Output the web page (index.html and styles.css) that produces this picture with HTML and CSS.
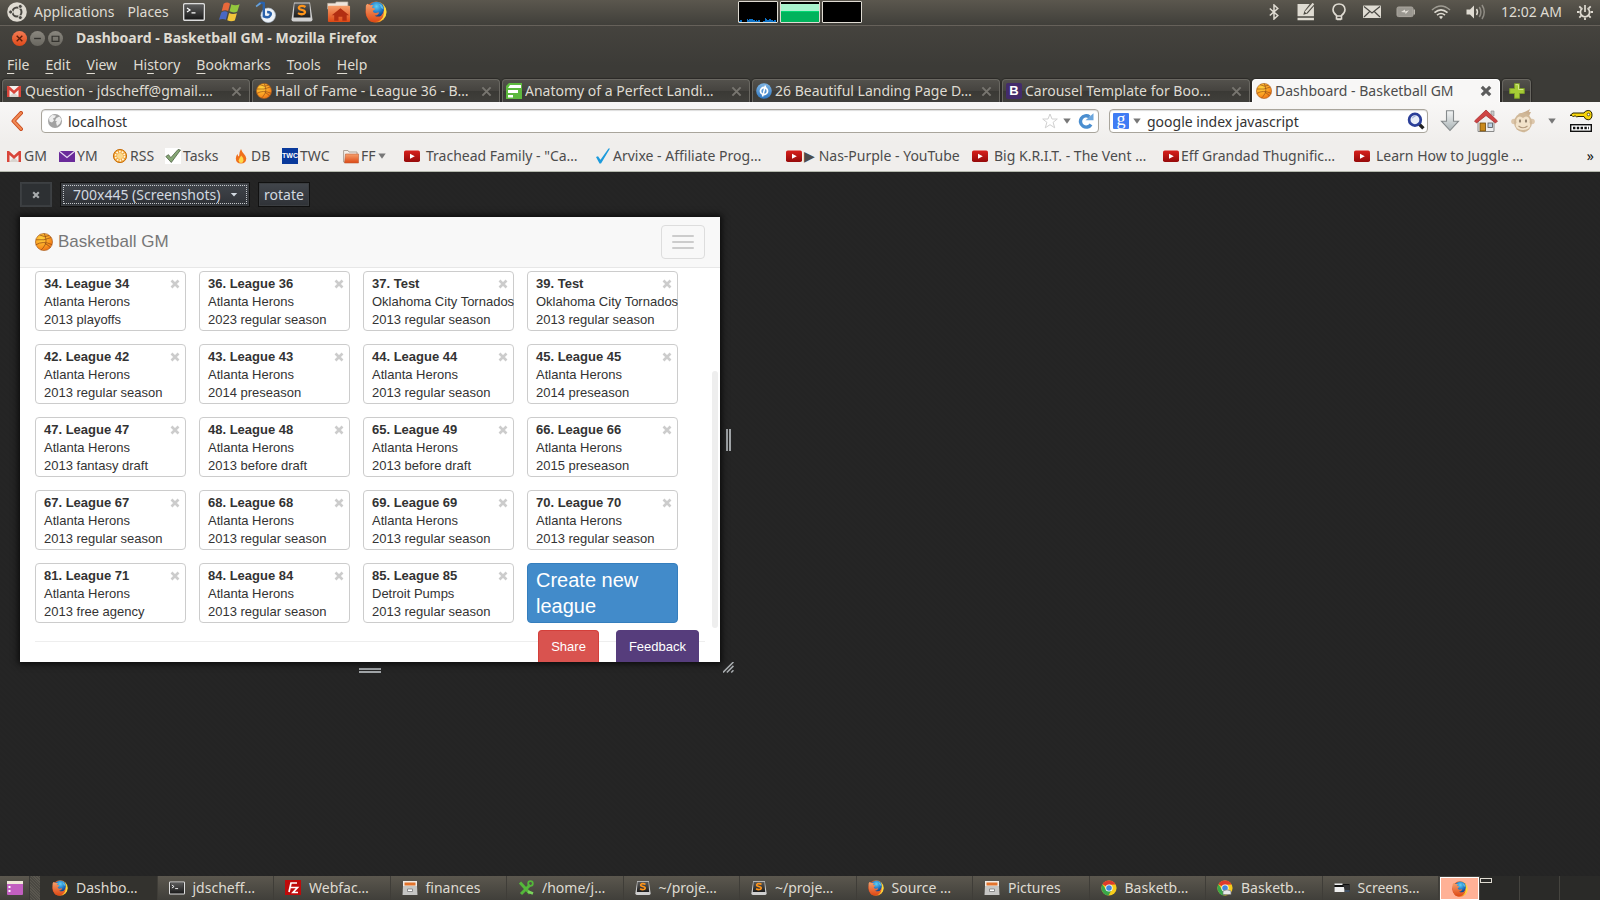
FILE: index.html
```html
<!DOCTYPE html>
<html lang="en">
<head>
<meta charset="utf-8">
<title>Dashboard - Basketball GM - Mozilla Firefox</title>
<link rel="stylesheet" href="styles.css">
</head>
<body>
<svg class="sprite" aria-hidden="true">
  <defs>
    <radialGradient id="g-ball" cx=".35" cy=".3" r=".8"><stop offset="0" stop-color="#ffd23e"/><stop offset=".6" stop-color="#fb9a20"/><stop offset="1" stop-color="#ea6a16"/></radialGradient>
    <radialGradient id="g-globe" cx=".5" cy=".3" r=".7"><stop offset="0" stop-color="#5fd0f5"/><stop offset=".6" stop-color="#1c6fc0"/><stop offset="1" stop-color="#0b2f6e"/></radialGradient>
    <linearGradient id="g-fox" x1="0" y1="0" x2="1" y2="0"><stop offset="0" stop-color="#d9431a"/><stop offset=".6" stop-color="#f07a1c"/><stop offset="1" stop-color="#ffdf3c"/></linearGradient>
    <linearGradient id="g-orange" x1="0" y1="0" x2="0" y2="1"><stop offset="0" stop-color="#f6a06c"/><stop offset="1" stop-color="#dd4814"/></linearGradient>
    <linearGradient id="g-red" x1="0" y1="0" x2="0" y2="1"><stop offset="0" stop-color="#d8201c"/><stop offset="1" stop-color="#960a0a"/></linearGradient>
    <linearGradient id="g-dark" x1="0" y1="0" x2="0" y2="1"><stop offset="0" stop-color="#5a5a5a"/><stop offset="1" stop-color="#1c1c1c"/></linearGradient>
    <linearGradient id="g-silver" x1="0" y1="0" x2="0" y2="1"><stop offset="0" stop-color="#f4f5f5"/><stop offset="1" stop-color="#a9b3b5"/></linearGradient>
    <linearGradient id="g-blue" x1="0" y1="0" x2="0" y2="1"><stop offset="0" stop-color="#7fb5e4"/><stop offset="1" stop-color="#2f78c2"/></linearGradient>
  </defs>
  <symbol id="i-ball" viewBox="0 0 16 16"><circle cx="8" cy="8" r="7.600" fill="url(#g-ball)" stroke="#a8601f" stroke-width=".6"/><path d="M1 6Q8 7 14.500 4M4 1.700Q9 4.500 12.500 2.200M8.200 .5Q11 7 9 10.500T5.500 15M.8 10.500Q7 6.500 15 10.300M9 9.500Q12 10.500 13.500 13" fill="none" stroke="#8a4312" stroke-width=".6"/></symbol>
  <symbol id="i-firefox" viewBox="0 0 24 24"><circle cx="12" cy="12" r="11.500" fill="url(#g-fox)"/><circle cx="12.500" cy="9.500" r="8.800" fill="url(#g-globe)"/><path d="M14 3q3 1 3 3t3 3q0-3-2-5z" fill="#6fd3f3" opacity=".7"/><path d="M1 5q1-2 2-2 1 1.500 3 1.500Q8 4 9.500 5q-2 1-1.500 2.500 3 0 3 1-.5 1.500-2.500 2 .5 2.500 3 2.500 1.500 0 3-.7 1 .5.500 1.300-1.500 2.400-4.500 2.400 4 2 7 0 3-2 2.800-6 2 6-2 10-6 5-13 2Q0 17.500 1 5z" fill="url(#g-orange)"/><path d="M20 4q5 7 1.500 13.500Q18 22 13 23.200q7-3 7.500-9Q21 8 20 4z" fill="#ffd83a"/></symbol>
  <symbol id="i-ubuntu" viewBox="0 0 20 20"><circle cx="10" cy="10" r="9.800" fill="#dfdbd2"/><circle cx="10" cy="10" r="4.500" fill="none" stroke="#4a4843" stroke-width="2"/><path d="M10 10L4 10M10 10L13.500 4M10 10L13.500 16" stroke="#dfdbd2" stroke-width="1.200"/><circle cx="10" cy="10" r="3" fill="#dfdbd2"/><g fill="#4a4843" stroke="#dfdbd2" stroke-width=".9"><circle cx="3.600" cy="10" r="2"/><circle cx="13.300" cy="4.400" r="2"/><circle cx="13.300" cy="15.600" r="2"/></g></symbol>
  <symbol id="i-term" viewBox="0 0 22 18"><rect x=".7" y=".7" width="20.600" height="16.600" rx="1" fill="#222" stroke="#ddd" stroke-width="1.400"/><rect x="2" y="2" width="18" height="14" fill="url(#g-dark)"/><path d="M4 5l3 2-3 2M8.500 9.800h4" fill="none" stroke="#fff" stroke-width="1.200"/></symbol>
  <symbol id="i-windows" viewBox="0 0 24 22"><path d="M5 2q4-2.500 7 0l-2 8q-3-2-7 0z" fill="#e8683a"/><path d="M13.500 2.500q4 2.500 9 0l-2.500 8q-4 2-8.500-.2z" fill="#93c83e"/><path d="M2.500 11.500q4-2.500 7 0l-2 8q-3.500-2-7.500 0z" fill="#4a68c4"/><path d="M11 12q4 2 8.500.3l-2.200 8Q13 22 9 20z" fill="#f2c53a"/></symbol>
  <symbol id="i-bluefish" viewBox="0 0 20 20"><circle cx="12" cy="13" r="6.600" fill="#eef3f8" stroke="#aebccc" stroke-width=".6"/><path d="M3 3.500q2-3 5-1.500v12q4.500 2 6-1t-3-3" fill="none" stroke="#2a62ab" stroke-width="2.200"/><path d="M1 5l4-3" stroke="#6aa2d8" stroke-width="1.500"/></symbol>
  <symbol id="i-sublime" viewBox="0 0 22 20"><path d="M3 .5h16l2.500 17q0 2-2 2h-17q-2 0-2-2z" fill="#cfcfcf"/><path d="M3.500 1.500h15l1 14h-17z" fill="url(#g-dark)"/><path d="M14.500 5q-3-1.800-5.500-.7-2.300 1.600-.2 3l4 1.200q2.400 1.500.2 3.200-3 1.300-6-.6" fill="none" stroke="#ff9419" stroke-width="2.300"/></symbol>
  <symbol id="i-homefolder" viewBox="0 0 25 22"><path d="M.7 2h8l1-1.500h12V8H.7z" fill="#eee5dc" stroke="#c1b3a5" stroke-width=".7"/><rect x="1" y="4.500" width="23" height="17" rx="1" fill="url(#g-orange)"/><path d="M14 7l9 7.500h-2.500V20h-4.500v-4h-4v4H7.500v-5.500H5z" fill="#b22e12"/></symbol>
  <symbol id="i-bt" viewBox="0 0 10 16"><path d="M.8 4.500l8 7L5 15V1l3.800 3.500-8 7" fill="none" stroke="#dfdbd2" stroke-width="1.500"/></symbol>
  <symbol id="i-note" viewBox="0 0 17 17"><path d="M.5 1H12L7 7.500 6 11l4-1 6-7v9.500H.5zM.5 14H16v2.200H.5z" fill="#dfdbd2"/><path d="M8 9l7.500-8.500" stroke="#dfdbd2" stroke-width="2"/></symbol>
  <symbol id="i-bulb" viewBox="0 0 14 18"><path d="M4.500 12.500Q1 10 1 6.500 1.500 1 7 1t6 5.500q0 3.500-3.500 6v3.500h-5z" fill="none" stroke="#dfdbd2" stroke-width="1.600"/><path d="M4.500 13h5M5 16.500h4" stroke="#dfdbd2" stroke-width="1.500"/></symbol>
  <symbol id="i-mail" viewBox="0 0 18 13"><rect width="18" height="12.500" rx=".8" fill="#dfdbd2"/><path d="M1 1l8 6.500L17 1M1 11.500l5.500-5.300M17 11.500l-5.500-5.300" fill="none" stroke="#4a4843" stroke-width="1.200"/></symbol>
  <symbol id="i-battery" viewBox="0 0 20 12"><rect x="1" y="1" width="16" height="9.600" rx="1.500" fill="#9a9790" stroke="#aaa69e" stroke-width="1"/><path d="M17.500 3.500h1.500v5h-1.500z" fill="#b8b4ac"/><path d="M5 6l4-2.500v2l4-1.200-3.500 4V6.600z" fill="#e4e0d9"/></symbol>
  <symbol id="i-wifi" viewBox="0 0 20 15"><g fill="none" stroke="#dfdbd2" stroke-width="1.600"><path d="M1 5.500Q10-2.500 19 5.500" opacity=".55"/><path d="M3.500 8.200q6.500-5.600 13 0M6 10.700q4-3.400 8 0"/></g><path d="M8 12.300q2-1.500 4 0l-2 2.500z" fill="#dfdbd2"/></symbol>
  <symbol id="i-sound" viewBox="0 0 20 16"><path d="M.5 5.500h3.500L8 1.500v13l-4-4H.5z" fill="#dfdbd2"/><g fill="none" stroke="#dfdbd2" stroke-width="1.500"><path d="M10.500 5q2 3 0 6"/><path d="M13.300 3q3.200 5 0 10M16 1q4.500 7 0 14" opacity=".45"/></g></symbol>
  <symbol id="i-power" viewBox="0 0 16 16"><path d="M5.500 4.300a4.600 4.600 0 1 0 5 0M8 1v7" fill="none" stroke="#dfdbd2" stroke-width="1.700"/><path d="M0 8h2.500M13.500 8H16M2.300 2.300l2 2M13.700 2.300l-2 2M2.300 13.700l2-2M13.700 13.700l-2-2M8 13.500V16" stroke="#dfdbd2" stroke-width="1.800"/></symbol>
  <symbol id="i-x" viewBox="0 0 10 10"><path d="M1.500 1.500l7 7M8.500 1.500l-7 7" stroke="currentColor" stroke-width="2.600" fill="none"/></symbol>
  <symbol id="i-xthin" viewBox="0 0 12 12"><path d="M1.500 1.500l9 9M10.500 1.500l-9 9" stroke="currentColor" stroke-width="2.200" fill="none"/></symbol>
  <symbol id="i-gmail" viewBox="0 0 16 16"><path d="M1 3h14v11H1z" fill="#f4f1ee"/><path d="M3 14l5-5 5 5z" fill="#d9d4cf"/><path d="M1 3h2l5 4.500L13 3h2v11h-2.500V7L8 11 3.500 7v7H1z" fill="#d9453a"/></symbol>
  <symbol id="i-form" viewBox="0 0 16 16"><path d="M3 0h13v16H0V3z" fill="#5db83e"/><path d="M4 2h11v3H2zM2 7h10v3H2zM2 12h5v2.500H2z" fill="#fff"/></symbol>
  <symbol id="i-phi" viewBox="0 0 16 16"><circle cx="8" cy="8" r="7.800" fill="url(#g-blue)"/><circle cx="8" cy="8" r="3.500" fill="none" stroke="#fff" stroke-width="1.800"/><path d="M9.500 2.500l-3 11" stroke="#fff" stroke-width="1.500"/></symbol>
  <symbol id="i-plus" viewBox="0 0 16 16"><path d="M5.500.7h5v4.800h4.800v5h-4.800v4.800h-5v-4.800H.7v-5h4.800z" fill="#a6cc35" stroke="#7c9b2a" stroke-width="1"/><path d="M6.500 1.700h3v4.800h4.800" fill="none" stroke="#d5e98a"/></symbol>
  <symbol id="i-back" viewBox="0 0 13 20"><path d="M11 2L3.500 10l7.500 8" fill="none" stroke="#c9481a" stroke-width="4" stroke-linejoin="round" stroke-linecap="round"/><path d="M11 2L3.500 10l7.500 8" fill="none" stroke="#f08a55" stroke-width="2.200" stroke-linejoin="round" stroke-linecap="round"/></symbol>
  <symbol id="i-globe" viewBox="0 0 16 16"><circle cx="8" cy="8" r="7" fill="#a2a2a2"/><path d="M2 5l3-3 4 .5-1 2-2 1 1 2-2 2-2.500-1zM9.500 5l3-1.500 2 3-1.500 4-3 2.500-1-3.500 1-1-2-1z" fill="#eee"/></symbol>
  <symbol id="i-star" viewBox="0 0 16 16"><path d="M8 1l2 5h5.300l-4.200 3.300 1.600 5.500L8 11.700l-4.700 3.100 1.600-5.500L.7 6H6z" fill="#fff" stroke="#d0d0d0" stroke-width="1"/></symbol>
  <symbol id="i-tri" viewBox="0 0 8 6"><path d="M.3.500h7.400L4 5.700z" fill="currentColor"/></symbol>
  <symbol id="i-tri-sm" viewBox="0 0 8 6"><path d="M.8 1h6.400L4 4.600z" fill="currentColor"/></symbol>
  <symbol id="i-reload" viewBox="0 0 16 16"><path d="M13 11.500A5.700 5.700 0 1 1 11.500 3.800" fill="none" stroke="#4a8ed0" stroke-width="3.400"/><path d="M7.500 7.300L15.500.3v7z" fill="#6ba5dc"/></symbol>
  <symbol id="i-mag" viewBox="0 0 17 17"><path d="M11 11l4.500 4.500" stroke="#222" stroke-width="3.200"/><circle cx="7.500" cy="7.300" r="5.500" fill="#e9eef8" stroke="#2b3f99" stroke-width="2.600"/><path d="M5 6q1-2 3-2" stroke="#9fb2dc" fill="none"/></symbol>
  <symbol id="i-down" viewBox="0 0 20 22"><path d="M6.500.7h7v10.500h5L10 20.500 1.500 11.200h5z" fill="url(#g-silver)" stroke="#858a8c" stroke-width="1.100"/></symbol>
  <symbol id="i-home" viewBox="0 0 24 24"><path d="M4 11l8-8 8 8v11.500H4z" fill="#eee" stroke="#8a8a8a"/><path d="M17 2h3v5l-3-2z" fill="#c9c9c9" stroke="#888" stroke-width=".6"/><path d="M.5 12L12 1 23.500 12l-2 2L12 6.500 2.500 14z" fill="#cf4444" stroke="#a32626" stroke-width=".7"/><rect x="6" y="14" width="5.500" height="8" fill="#c98a1c" stroke="#6e480a" stroke-width=".8"/><rect x="14" y="14" width="4.500" height="4.500" fill="#bcd2e6" stroke="#555" stroke-width=".8"/></symbol>
  <symbol id="i-monkey" viewBox="0 0 24 24"><path d="M7 5q6-1 12-5l-1 3 2 0-2 4z" fill="#cbb090"/><circle cx="3" cy="12.500" r="2.800" fill="#dcc6aa"/><circle cx="21" cy="12.500" r="2.800" fill="#dcc6aa"/><ellipse cx="12" cy="13.500" rx="9" ry="9.700" fill="#d0b898"/><path d="M12 9q2.500-2.500 5-1 2.500 2 1.500 5.500 2 3.500-1 6-5 3-11 0-3-2.500-1-6Q4.500 10 7 8q2.500-1.500 5 1z" fill="#f2e3cb"/><ellipse cx="9" cy="12" rx="1.100" ry="1.700" fill="#8f7f6c"/><ellipse cx="15" cy="12" rx="1.100" ry="1.700" fill="#8f7f6c"/><path d="M7.500 17q4.500 3.500 9 0" fill="none" stroke="#b39a7e" stroke-width="1.100"/></symbol>
  <symbol id="i-key" viewBox="0 0 24 24"><path d="M15 4h-11L1 6.500h2l1.500 1.500 1.500-1.500 1.500 1.500L9 7.500h6q1 3.300 4.200 3.300Q23 10.500 23 6T19.200 1.500Q16 1.500 15 4z" fill="#f6d40a" stroke="#2b2600" stroke-width="1"/><circle cx="19.500" cy="5.500" r="1.300" fill="#fff" stroke="#2b2600" stroke-width=".7"/><rect x="1.700" y="15.700" width="20.600" height="6.600" fill="#fff" stroke="#111" stroke-width="1.400"/><path d="M4 19h16" stroke="#111" stroke-width="2.400" stroke-dasharray="2.400 1.400"/></symbol>
  <symbol id="i-ymail" viewBox="0 0 16 16"><rect y="3" width="16" height="11" fill="#6a2a9a"/><path d="M0 3l8 6.500L16 3" fill="none" stroke="#e9dcf3" stroke-width="1.200"/></symbol>
  <symbol id="i-rss" viewBox="0 0 16 16"><circle cx="8" cy="8" r="6.600" fill="#f0a030" stroke="#c8700e" stroke-width="1"/><circle cx="8" cy="8" r="4.500" fill="none" stroke="#fff6dc" stroke-width="1.800" stroke-dasharray="1.800 1"/><circle cx="8" cy="8" r="3" fill="#fbd88a"/></symbol>
  <symbol id="i-tasks" viewBox="0 0 16 16"><path d="M0 0h16v16H0z" fill="#fff"/><path d="M.8 8.500l2.700-1.800 2.300 3L13 1.500l2.500.5L6.300 14.500z" fill="#87a876" stroke="#4e6144" stroke-width=".8"/></symbol>
  <symbol id="i-fire" viewBox="0 0 16 16"><path d="M8 1q1 3 3 5t2.300 4.500Q13 15.500 8 15.500T2.800 10.500Q3 7.500 4.500 6q.3 2 1.500 2.500Q6 4 8 1z" fill="#f0701c"/><path d="M8.300 7.500q2.500 2.500 2.200 5Q10 15 8 15t-2.400-2.500Q6 10.500 8.300 7.500z" fill="#ffd84a"/></symbol>
  <symbol id="i-folder" viewBox="0 0 16 16"><path d="M.6 14V2.500H5l1 1.500h8V14z" fill="#f3eee8" stroke="#a59a90" stroke-width=".9"/><path d="M2.500 6h13v9h-14z" fill="url(#g-orange)" stroke="#c0603a" stroke-width=".6"/></symbol>
  <symbol id="i-yt" viewBox="0 0 16 16"><rect y="2.500" width="16" height="11.500" rx="1.800" fill="url(#g-red)"/><path d="M6 5.800l4.800 2.500L6 10.800z" fill="#fff"/></symbol>
  <symbol id="i-check" viewBox="0 0 16 16"><path d="M1 9l2-.7 2.500 3.500L13.500.5l1.500 0L6 15.500H4.500z" fill="#1d9bdc"/></symbol>
  <symbol id="i-desk" viewBox="0 0 16 16"><rect y="1" width="16" height="14" rx="1" fill="#c25fc0"/><path d="M0 1h16v3H0z" fill="#eee8d8"/><path d="M1.500 6h2v2h-2zM1.500 10h2v2h-2z" fill="#fff"/></symbol>
  <symbol id="i-fz" viewBox="0 0 16 16"><path d="M0 0h16v15H0z" fill="#bf0a0a"/><path d="M4 12L6 3h6M5 7.500h4M8 7.500h4.500L8 12.500h5" fill="none" stroke="#fff" stroke-width="1.700"/></symbol>
  <symbol id="i-drawer" viewBox="0 0 16 16"><rect x="1" y="1" width="14" height="5" fill="#efeae4"/><path d="M2.500 2.500h11v3h-11z" fill="#e2732b"/><path d="M1 6h14l.5 9H.5z" fill="#c6c6c4"/><path d="M5.500 9h5v2.500h-5z" fill="#fff" stroke="#777" stroke-width=".8"/></symbol>
  <symbol id="i-scissor" viewBox="0 0 16 16"><path d="M2 2.500l10 11M12 5L3 14" stroke="#54b83a" stroke-width="3"/><circle cx="12.500" cy="3.500" r="2.300" fill="none" stroke="#54b83a" stroke-width="1.800"/><path d="M10 11.500l5 2" stroke="#7bd55c" stroke-width="2.500"/></symbol>
  <symbol id="i-chrome" viewBox="0 0 16 16"><circle cx="8" cy="8" r="7.600" fill="#f7cc1c"/><path d="M8 8L1.400 4.200A7.600 7.600 0 0 1 14.600 4.500L8 4.800z" fill="#dd3b2b"/><path d="M1.400 4.200A7.600 7.600 0 0 0 7.500 15.600L10.500 10 5 9.500z" fill="#3aa64a"/><circle cx="8" cy="8" r="3.600" fill="#fff"/><circle cx="8" cy="8" r="2.800" fill="#3f86dd"/></symbol>
  <symbol id="i-chrome-app" viewBox="0 0 16 16"><use href="#i-chrome" width="16" height="16"/><path d="M6 11q4-2.500 8 0v3.500H6z" fill="#e9e9e9" stroke="#777" stroke-width=".7"/></symbol>
  <symbol id="i-shot" viewBox="0 0 16 16"><path d="M.5 4h15v8H.5z" fill="#111"/><path d="M.5 3.500h8v1.500h-8zM.5 7h10v5H.5z" fill="#eee"/><path d="M9 5h6.500v5H11z" fill="#333"/><path d="M11 11h4.500" stroke="#6b8cb5"/></symbol>
</svg>

<header class="panel">
  <div class="panel-left">
    <svg class="ic20"><use href="#i-ubuntu"/></svg>
    <button class="panel-menu" type="button">Applications</button>
    <button class="panel-menu" type="button">Places</button>
    <div class="launchers">
      <svg class="ic22"><use href="#i-term"/></svg>
      <svg class="ic22"><use href="#i-windows"/></svg>
      <svg class="ic22"><use href="#i-bluefish"/></svg>
      <svg class="ic22"><use href="#i-sublime"/></svg>
      <svg class="ic24"><use href="#i-homefolder"/></svg>
      <svg class="ic22"><use href="#i-firefox"/></svg>
    </div>
  </div>
  <div class="monitors">
    <svg class="monitor" viewBox="0 0 38 20"><path d="M0 20v-1h1v-1h2v2zM8 20v-3h1v1h1v-1h4v1h2v1h1v-1h1v1h1v-1h2v2zM24 20v-1h2v-3h1v1h1v1h2v-1h2v1h2v1h1v-1h2v2z" fill="#0d73c9"/></svg>
    <svg class="monitor" viewBox="0 0 38 20"><path d="M0 2h38v8H0z" fill="#a8f2cc"/><path d="M0 9h38v11H0z" fill="#00b35c"/><path d="M0 9h38v1H0z" fill="#00d873"/></svg>
    <svg class="monitor" viewBox="0 0 38 20"></svg>
  </div>
  <div class="panel-right">
    <svg class="ic16"><use href="#i-bt"/></svg>
    <svg class="ic18"><use href="#i-note"/></svg>
    <svg class="ic18"><use href="#i-bulb"/></svg>
    <svg class="ic18"><use href="#i-mail"/></svg>
    <svg class="ic20"><use href="#i-battery"/></svg>
    <svg class="ic20"><use href="#i-wifi"/></svg>
    <svg class="ic20"><use href="#i-sound"/></svg>
    <time>12:02 AM</time>
    <svg class="ic16"><use href="#i-power"/></svg>
  </div>
</header>

<div class="chrome">
  <div class="titlebar">
    <button class="wm wm-close" type="button" aria-label="Close window"><svg viewBox="0 0 8 8"><path d="M1.500 1.500l5 5M6.500 1.500l-5 5" stroke="#5a1f0c" stroke-width="1.200"/></svg></button>
    <button class="wm" type="button" aria-label="Minimize"><svg viewBox="0 0 8 8"><path d="M1 4h6" stroke="#33322e" stroke-width="1.200"/></svg></button>
    <button class="wm" type="button" aria-label="Maximize"><svg viewBox="0 0 8 8"><path d="M1 2h6v4.500H1z" fill="none" stroke="#33322e" stroke-width="1.100"/></svg></button>
    <h1>Dashboard - Basketball GM - Mozilla Firefox</h1>
  </div>
  <nav class="menubar">
    <button type="button"><u>F</u>ile</button>
    <button type="button"><u>E</u>dit</button>
    <button type="button"><u>V</u>iew</button>
    <button type="button">Hi<u>s</u>tory</button>
    <button type="button"><u>B</u>ookmarks</button>
    <button type="button"><u>T</u>ools</button>
    <button type="button"><u>H</u>elp</button>
  </nav>
  <div class="tabs">
    <div class="tab"><svg class="ic16"><use href="#i-gmail"/></svg><span>Question - jdscheff@gmail.…</span><button type="button" aria-label="Close tab"><svg><use href="#i-xthin"/></svg></button></div>
    <div class="tab"><svg class="ic16"><use href="#i-ball"/></svg><span>Hall of Fame - League 36 - B…</span><button type="button" aria-label="Close tab"><svg><use href="#i-xthin"/></svg></button></div>
    <div class="tab"><svg class="ic16"><use href="#i-form"/></svg><span>Anatomy of a Perfect Landi…</span><button type="button" aria-label="Close tab"><svg><use href="#i-xthin"/></svg></button></div>
    <div class="tab"><svg class="ic16"><use href="#i-phi"/></svg><span>26 Beautiful Landing Page D…</span><button type="button" aria-label="Close tab"><svg><use href="#i-xthin"/></svg></button></div>
    <div class="tab"><b class="fav-b">B</b><span>Carousel Template for Boo…</span><button type="button" aria-label="Close tab"><svg><use href="#i-xthin"/></svg></button></div>
    <div class="tab tab-on"><svg class="ic16"><use href="#i-ball"/></svg><span>Dashboard - Basketball GM</span><button type="button" aria-label="Close tab"><svg><use href="#i-x"/></svg></button></div>
    <button class="tab-new" type="button" aria-label="New tab"><svg class="ic16"><use href="#i-plus"/></svg></button>
  </div>
</div>

<div class="toolbars">
  <div class="navbar">
    <button class="plain back" type="button" aria-label="Back"><svg><use href="#i-back"/></svg></button>
    <div class="field field-url">
      <svg class="ic16"><use href="#i-globe"/></svg>
      <input type="text" value="localhost" aria-label="Address">
      <svg class="ic16"><use href="#i-star"/></svg>
      <svg class="tri"><use href="#i-tri"/></svg>
      <svg class="ic16"><use href="#i-reload"/></svg>
    </div>
    <div class="field field-search">
      <b class="fav-g">g</b>
      <svg class="tri"><use href="#i-tri"/></svg>
      <input type="text" value="google index javascript" aria-label="Search">
      <svg class="ic18"><use href="#i-mag"/></svg>
    </div>
    <div class="tools">
      <svg class="ic22"><use href="#i-down"/></svg>
      <svg class="ic24"><use href="#i-home"/></svg>
      <svg class="ic24"><use href="#i-monkey"/></svg>
      <svg class="tri"><use href="#i-tri"/></svg>
      <svg class="ic24"><use href="#i-key"/></svg>
    </div>
  </div>
  <nav class="bookmarks">
    <a href="#"><svg class="ic16"><use href="#i-gmail"/></svg>GM</a>
    <a href="#"><svg class="ic16"><use href="#i-ymail"/></svg>YM</a>
    <a href="#"><svg class="ic16"><use href="#i-rss"/></svg>RSS</a>
    <a href="#"><svg class="ic16"><use href="#i-tasks"/></svg>Tasks</a>
    <a href="#"><svg class="ic16"><use href="#i-fire"/></svg>DB</a>
    <a href="#"><b class="fav-twc">TWC</b>TWC</a>
    <a href="#"><svg class="ic16"><use href="#i-folder"/></svg>FF<svg class="tri"><use href="#i-tri"/></svg></a>
    <a href="#" class="wide"><svg class="ic16"><use href="#i-yt"/></svg>Trachead Family - "Ca…</a>
    <a href="#"><svg class="ic16"><use href="#i-check"/></svg>Arvixe - Affiliate Prog…</a>
    <a href="#"><svg class="ic16"><use href="#i-yt"/></svg>▶ Nas-Purple - YouTube</a>
    <a href="#" class="wide"><svg class="ic16"><use href="#i-yt"/></svg>Big K.R.I.T. - The Vent …</a>
    <a href="#"><svg class="ic16"><use href="#i-yt"/></svg>Eff Grandad Thugnific…</a>
    <a href="#" class="wide"><svg class="ic16"><use href="#i-yt"/></svg>Learn How to Juggle …</a>
    <button class="plain more" type="button" aria-label="More bookmarks">»</button>
  </nav>
</div>

<main class="stage">
  <div class="rdm-bar">
    <button class="rdm-close" type="button" aria-label="Close responsive view"><svg><use href="#i-x"/></svg></button>
    <div class="rdm-size">
      <select aria-label="Viewport size"><option>700x445 (Screenshots)</option></select>
      <svg class="tri"><use href="#i-tri-sm"/></svg>
    </div>
    <button class="rdm-rotate" type="button">rotate</button>
  </div>
  <div class="rdm">
    <section class="viewport">
      <div class="site-nav">
        <a class="brand" href="#"><svg class="ic18"><use href="#i-ball"/></svg>Basketball GM</a>
        <button class="burger" type="button" aria-label="Toggle navigation"><i></i><i></i><i></i></button>
      </div>
      <ul class="leagues">
        <li><a href="#"><b>34. League 34</b><br>Atlanta Herons<br>2013 playoffs</a><button type="button" aria-label="Delete"><svg><use href="#i-x"/></svg></button></li>
        <li><a href="#"><b>36. League 36</b><br>Atlanta Herons<br>2023 regular season</a><button type="button" aria-label="Delete"><svg><use href="#i-x"/></svg></button></li>
        <li><a href="#"><b>37. Test</b><br>Oklahoma City Tornados<br>2013 regular season</a><button type="button" aria-label="Delete"><svg><use href="#i-x"/></svg></button></li>
        <li><a href="#"><b>39. Test</b><br>Oklahoma City Tornados<br>2013 regular season</a><button type="button" aria-label="Delete"><svg><use href="#i-x"/></svg></button></li>
        <li><a href="#"><b>42. League 42</b><br>Atlanta Herons<br>2013 regular season</a><button type="button" aria-label="Delete"><svg><use href="#i-x"/></svg></button></li>
        <li><a href="#"><b>43. League 43</b><br>Atlanta Herons<br>2014 preseason</a><button type="button" aria-label="Delete"><svg><use href="#i-x"/></svg></button></li>
        <li><a href="#"><b>44. League 44</b><br>Atlanta Herons<br>2013 regular season</a><button type="button" aria-label="Delete"><svg><use href="#i-x"/></svg></button></li>
        <li><a href="#"><b>45. League 45</b><br>Atlanta Herons<br>2014 preseason</a><button type="button" aria-label="Delete"><svg><use href="#i-x"/></svg></button></li>
        <li><a href="#"><b>47. League 47</b><br>Atlanta Herons<br>2013 fantasy draft</a><button type="button" aria-label="Delete"><svg><use href="#i-x"/></svg></button></li>
        <li><a href="#"><b>48. League 48</b><br>Atlanta Herons<br>2013 before draft</a><button type="button" aria-label="Delete"><svg><use href="#i-x"/></svg></button></li>
        <li><a href="#"><b>65. League 49</b><br>Atlanta Herons<br>2013 before draft</a><button type="button" aria-label="Delete"><svg><use href="#i-x"/></svg></button></li>
        <li><a href="#"><b>66. League 66</b><br>Atlanta Herons<br>2015 preseason</a><button type="button" aria-label="Delete"><svg><use href="#i-x"/></svg></button></li>
        <li><a href="#"><b>67. League 67</b><br>Atlanta Herons<br>2013 regular season</a><button type="button" aria-label="Delete"><svg><use href="#i-x"/></svg></button></li>
        <li><a href="#"><b>68. League 68</b><br>Atlanta Herons<br>2013 regular season</a><button type="button" aria-label="Delete"><svg><use href="#i-x"/></svg></button></li>
        <li><a href="#"><b>69. League 69</b><br>Atlanta Herons<br>2013 regular season</a><button type="button" aria-label="Delete"><svg><use href="#i-x"/></svg></button></li>
        <li><a href="#"><b>70. League 70</b><br>Atlanta Herons<br>2013 regular season</a><button type="button" aria-label="Delete"><svg><use href="#i-x"/></svg></button></li>
        <li><a href="#"><b>81. League 71</b><br>Atlanta Herons<br>2013 free agency</a><button type="button" aria-label="Delete"><svg><use href="#i-x"/></svg></button></li>
        <li><a href="#"><b>84. League 84</b><br>Atlanta Herons<br>2013 regular season</a><button type="button" aria-label="Delete"><svg><use href="#i-x"/></svg></button></li>
        <li><a href="#"><b>85. League 85</b><br>Detroit Pumps<br>2013 regular season</a><button type="button" aria-label="Delete"><svg><use href="#i-x"/></svg></button></li>
        <li class="create"><a href="#">Create new<br>league</a></li>
      </ul>
      <hr>
      <div class="scroll-thumb"></div>
      <div class="dock">
        <button class="share" type="button">Share</button>
        <button class="feedback" type="button">Feedback</button>
      </div>
    </section>
    <div class="grip-right"></div>
    <div class="grip-bottom"></div>
    <svg class="grip-corner" viewBox="0 0 10 10"><path d="M0 9.500L9.500 0M3.500 9.500l6-6M7.500 9.500l2-2" stroke="#a9adb0" stroke-width="1.400"/></svg>
  </div>
</main>

<footer class="taskbar">
  <button class="desk" type="button" aria-label="Show desktop"><svg class="ic16"><use href="#i-desk"/></svg></button>
  <div class="task-grip"></div>
  <div class="tasks">
    <button class="on" type="button"><svg class="ic16"><use href="#i-firefox"/></svg>Dashbo…</button>
    <button type="button"><svg class="ic16"><use href="#i-term"/></svg>jdscheff…</button>
    <button type="button"><svg class="ic16"><use href="#i-fz"/></svg>Webfac…</button>
    <button type="button"><svg class="ic16"><use href="#i-drawer"/></svg>finances</button>
    <button type="button"><svg class="ic16"><use href="#i-scissor"/></svg>/home/j…</button>
    <button type="button"><svg class="ic16"><use href="#i-sublime"/></svg>~/proje…</button>
    <button type="button"><svg class="ic16"><use href="#i-sublime"/></svg>~/proje…</button>
    <button type="button"><svg class="ic16"><use href="#i-firefox"/></svg>Source …</button>
    <button type="button"><svg class="ic16"><use href="#i-drawer"/></svg>Pictures</button>
    <button type="button"><svg class="ic16"><use href="#i-chrome"/></svg>Basketb…</button>
    <button type="button"><svg class="ic16"><use href="#i-chrome-app"/></svg>Basketb…</button>
    <button type="button"><svg class="ic16"><use href="#i-shot"/></svg>Screens…</button>
  </div>
  <div class="spaces">
    <div class="space-on"><svg class="ic16"><use href="#i-firefox"/></svg></div>
    <div><span class="mini"></span></div>
    <div></div>
    <div></div>
  </div>
</footer>
</body>
</html>
```
FILE: styles.css
```css
* { box-sizing: border-box; }

body {
  margin: 0;
  min-height: 100vh;
  display: flex;
  flex-direction: column;
  font: 14px/20px "Noto Sans", sans-serif;
  color: #4c4c4c;
  background: #242424;
}

button, input, select { font: inherit; color: inherit; margin: 0; }
button { padding: 0; border: 0; background: none; white-space: nowrap; }
a { color: inherit; text-decoration: none; }
svg { flex: none; display: block; }

.sprite { position: absolute; width: 0; height: 0; }
.ic16 { width: 16px; height: 16px; }
.ic18 { width: 18px; height: 18px; }
.ic20 { width: 20px; height: 20px; }
.ic22 { width: 22px; height: 22px; }
.ic24 { width: 24px; height: 24px; }
.tri { width: 8px; height: 6px; color: #777; }

/* Desktop panel */
.panel {
  display: grid;
  grid-template-columns: 1fr auto 1fr;
  align-items: center;
  height: 26px;
  padding: 0 7px 1px;
  color: #dfdbd2;
  background: linear-gradient(#5b574e, #403f3a);
  border-bottom: 1px solid #66615a;
}
.panel-left, .panel-right, .launchers, .monitors { display: flex; align-items: center; }
.panel-left { gap: 7px; }
.panel-menu + .panel-menu { margin-left: 6px; }
.launchers { gap: 14px; margin-left: 7px; }
.monitors { gap: 2px; }
.monitor { width: 40px; height: 22px; background: #000; border: 1px solid #dfdbd2; border-radius: 1px; }
.panel-right { justify-content: flex-end; gap: 15px; }

/* Window chrome */
.chrome { background: linear-gradient(#45433e, #3c3b37 40px); color: #dfdbd2; }
.titlebar { display: flex; align-items: center; gap: 3px; height: 24px; padding-left: 12px; }
.titlebar h1 { margin: 0 0 0 10px; font-size: 14px; line-height: 20px; font-weight: 700; }
.wm {
  display: grid;
  place-items: center;
  width: 15px;
  height: 15px;
  border-radius: 50%;
  background: linear-gradient(#8b8880, #68665f);
}
.wm svg { width: 9px; height: 9px; }
.wm-close { background: linear-gradient(#f47b54, #df4a1a); }
.menubar { display: flex; align-items: center; gap: 16px; height: 29px; padding-left: 7px; }
.menubar u { text-underline-offset: 3px; text-decoration-thickness: 1px; }

.tabs { display: flex; gap: 2px; padding: 0 2px; }
.tab, .tab-new {
  display: flex;
  align-items: center;
  height: 23px;
  border: 1px solid #6a6862;
  border-bottom: 0;
  border-radius: 4px 4px 0 0;
  background: linear-gradient(#53514c, #45433f 50%, #3a3935 50%, #403f3b);
  box-shadow: 0 0 1px 1px #2b2a27;
}
.tab { flex: 0 1 248px; min-width: 0; gap: 3px; padding: 0 7px 0 3px; }
.tab span { flex: 1; min-width: 0; overflow: hidden; white-space: nowrap; }
.tab button { color: #77756f; }
.tab button svg { width: 11px; height: 11px; }
.tab-on { color: #4c4c4c; background: #f8f7f6; border-color: #fff; }
.tab-on button { color: #5c5c5c; }
.tab-on button svg { width: 12px; height: 12px; }
.tab-new { width: 29px; justify-content: center; }

.fav-b, .fav-g, .fav-twc { flex: none; width: 16px; height: 16px; color: #fff; text-align: center; }
.fav-b { font: 700 13px/16px "Liberation Sans", sans-serif; background: #432b6b; border-radius: 2px; }
.fav-g { font: 400 18px/12px "Liberation Serif", serif; background: #3f7cf4; border-radius: 1px; }
.fav-twc { font: 700 7px/16px "Liberation Sans", sans-serif; background: #0a3a9c; }

/* Toolbars */
.toolbars { background: linear-gradient(#f8f7f6, #f0eeec 40px); border-bottom: 1px solid #b5b9ae; }
.navbar { display: flex; align-items: center; gap: 10px; height: 38px; padding: 0 7px 0 10px; }
.plain { flex: none; }
.back { width: 21px; }
.back svg { width: 13px; height: 20px; }
.field {
  display: flex;
  align-items: center;
  height: 24px;
  background: #fff;
  border: 1px solid #a9a59c;
  border-radius: 4px;
  box-shadow: inset 0 1px 1px #ddd;
}
.field input { flex: 1; min-width: 0; height: 22px; padding: 1px 0 0; border: 0; outline: 0; background: none; color: #333; }
.field-url { flex: 1; gap: 5px; padding: 0 4px 0 5px; }
.field-url .tri + svg { margin-left: 2px; }
.field-search { flex: 0 1 319px; gap: 4px; padding: 0 2px 0 3px; }
.field-search input { margin-left: 2px; }
.tools { display: flex; align-items: center; gap: 13px; margin-left: 1px; }

.bookmarks { display: flex; align-items: center; height: 31px; padding-left: 6px; }
.bookmarks a { display: flex; align-items: center; flex: none; gap: 2px; width: 53px; white-space: nowrap; }
.bookmarks a:nth-child(4) { width: 68px; }
.bookmarks a:nth-child(5) { width: 49px; }
.bookmarks a:nth-child(6), .bookmarks a:nth-child(7) { width: 61px; }
.bookmarks a:nth-child(n + 8) { width: 191px; }
.bookmarks a:nth-child(10) { width: 186px; }
.bookmarks a.wide { gap: 6px; }
.bookmarks a:nth-child(13) { flex: 0 1 191px; min-width: 0; }
.more { margin-left: auto; padding-right: 6px; color: #111; }

/* Responsive design view */
.stage {
  flex: 1;
  padding: 10px 20px;
  background:
    repeating-linear-gradient(45deg, transparent 0 2px, rgba(0, 0, 0, .04) 2px 4px),
    #252525;
}
.rdm-bar { display: flex; gap: 8px; height: 25px; margin-bottom: 10px; color: #d2d9e0; }
.rdm-close, .rdm-rotate, .rdm-size {
  display: flex;
  align-items: center;
  justify-content: center;
  border: 1px solid #111;
  background: linear-gradient(#42464c, #2f3237);
  box-shadow: 0 0 0 1px #3a3d40 inset;
}
.rdm-close { width: 32px; color: #a9acae; background: #2d3033; border-color: #3d4043; }
.rdm-close svg { width: 8px; height: 8px; }
.rdm-size { padding: 2px; }
.rdm-size select {
  width: 184px;
  height: 19px;
  padding: 0 20px 0 9px;
  appearance: none;
  background: none;
  border: 1px dotted #c5c9cc;
  border-radius: 0;
  line-height: 17px;
}
.rdm-size .tri { margin-left: -17px; margin-right: 9px; color: #d2d9e0; }
.rdm-rotate { width: 52px; }

.rdm {
  display: grid;
  grid-template-columns: 700px 16px;
  grid-template-rows: 445px 16px;
  justify-items: center;
  align-items: center;
}
.viewport {
  position: relative;
  width: 100%;
  height: 100%;
  overflow: hidden;
  background: #fff;
  color: #333;
  font: 13px/18px "Liberation Sans", Arial, sans-serif;
  box-shadow: 0 0 6px 2px #0c0c0c;
}
.grip-right { width: 5px; height: 22px; border: solid #a0a4a7; border-width: 0 2px; }
.grip-bottom { width: 22px; height: 5px; border: solid #a0a4a7; border-width: 2px 0; }
.grip-corner { width: 11px; height: 11px; justify-self: center; align-self: start; }

.site-nav {
  display: flex;
  align-items: center;
  justify-content: space-between;
  height: 51px;
  padding: 0 15px;
  background: #f8f8f8;
  border-bottom: 1px solid #e7e7e7;
}
.brand { display: flex; align-items: center; gap: 5px; font-size: 17px; line-height: 20px; color: #777; }
.burger {
  display: flex;
  flex-direction: column;
  justify-content: center;
  gap: 4px;
  width: 44px;
  height: 34px;
  padding: 0 10px;
  border: 1px solid #ddd;
  border-radius: 4px;
}
.burger i { height: 2px; border-radius: 1px; background: #ccc; }

.leagues {
  display: grid;
  grid-template-columns: repeat(4, 151px);
  gap: 13px;
  margin: 0;
  padding: 3px 15px 0;
  list-style: none;
}
.leagues li {
  display: flex;
  align-items: flex-start;
  height: 60px;
  padding: 3px 5px 0 8px;
  border: 1px solid #ccc;
  border-radius: 4px;
  overflow: clip;
  overflow-clip-margin: 1px;
}
.leagues a { flex: 1; min-width: 0; white-space: nowrap; }
.leagues button { color: #ccc; padding-top: 4px; }
.leagues button svg { width: 10px; height: 10px; }
.leagues .create { background: #428bca; border-color: #357ebd; color: #fff; font-size: 20px; line-height: 26px; }

.viewport hr { margin: 18px 15px 0; border: 0; border-top: 1px solid #eee; }
.scroll-thumb { position: absolute; right: 2px; top: 154px; width: 6px; height: 257px; border-radius: 3px; background: #eee; }
.dock { position: absolute; right: 21px; bottom: 0; display: flex; gap: 17px; }
.dock button { height: 32px; padding: 0 12px; border: 1px solid #d43f3a; border-bottom: 0; border-radius: 4px 4px 0 0; color: #fff; background: #d9534f; }
.dock .feedback { background: #563d7c; border-color: #563d7c; }

/* Task bar */
.taskbar { display: flex; height: 24px; color: #dfdbd2; background: linear-gradient(#5b574e, #403f3a); }
.desk { display: grid; place-items: center; width: 30px; border-right: 1px solid #3a3935; }
.task-grip { width: 10px; background: repeating-linear-gradient(45deg, #4a4842 0 1px, #5a574f 1px 2px); }
.tasks { display: flex; flex: 1; min-width: 0; }
.tasks button { display: flex; align-items: center; flex: 1; min-width: 0; gap: 8px; padding-left: 11px; border-right: 1px solid #3f3d38; overflow: hidden; }
.tasks .on { background: #33322e; padding-left: 12px; }
.spaces { display: flex; gap: 1px; padding-left: 1px; background: #45443f; }
.spaces div { display: flex; width: 39px; background: #2a2a28; }
.spaces div:last-child { width: 40px; }
.spaces .space-on { align-items: center; justify-content: center; background: #ffb196; border: 1px solid #fff; margin-top: 1px; }
.mini { width: 12px; height: 5px; margin-top: 2px; border: 1px solid #dfdbd2; }
```
